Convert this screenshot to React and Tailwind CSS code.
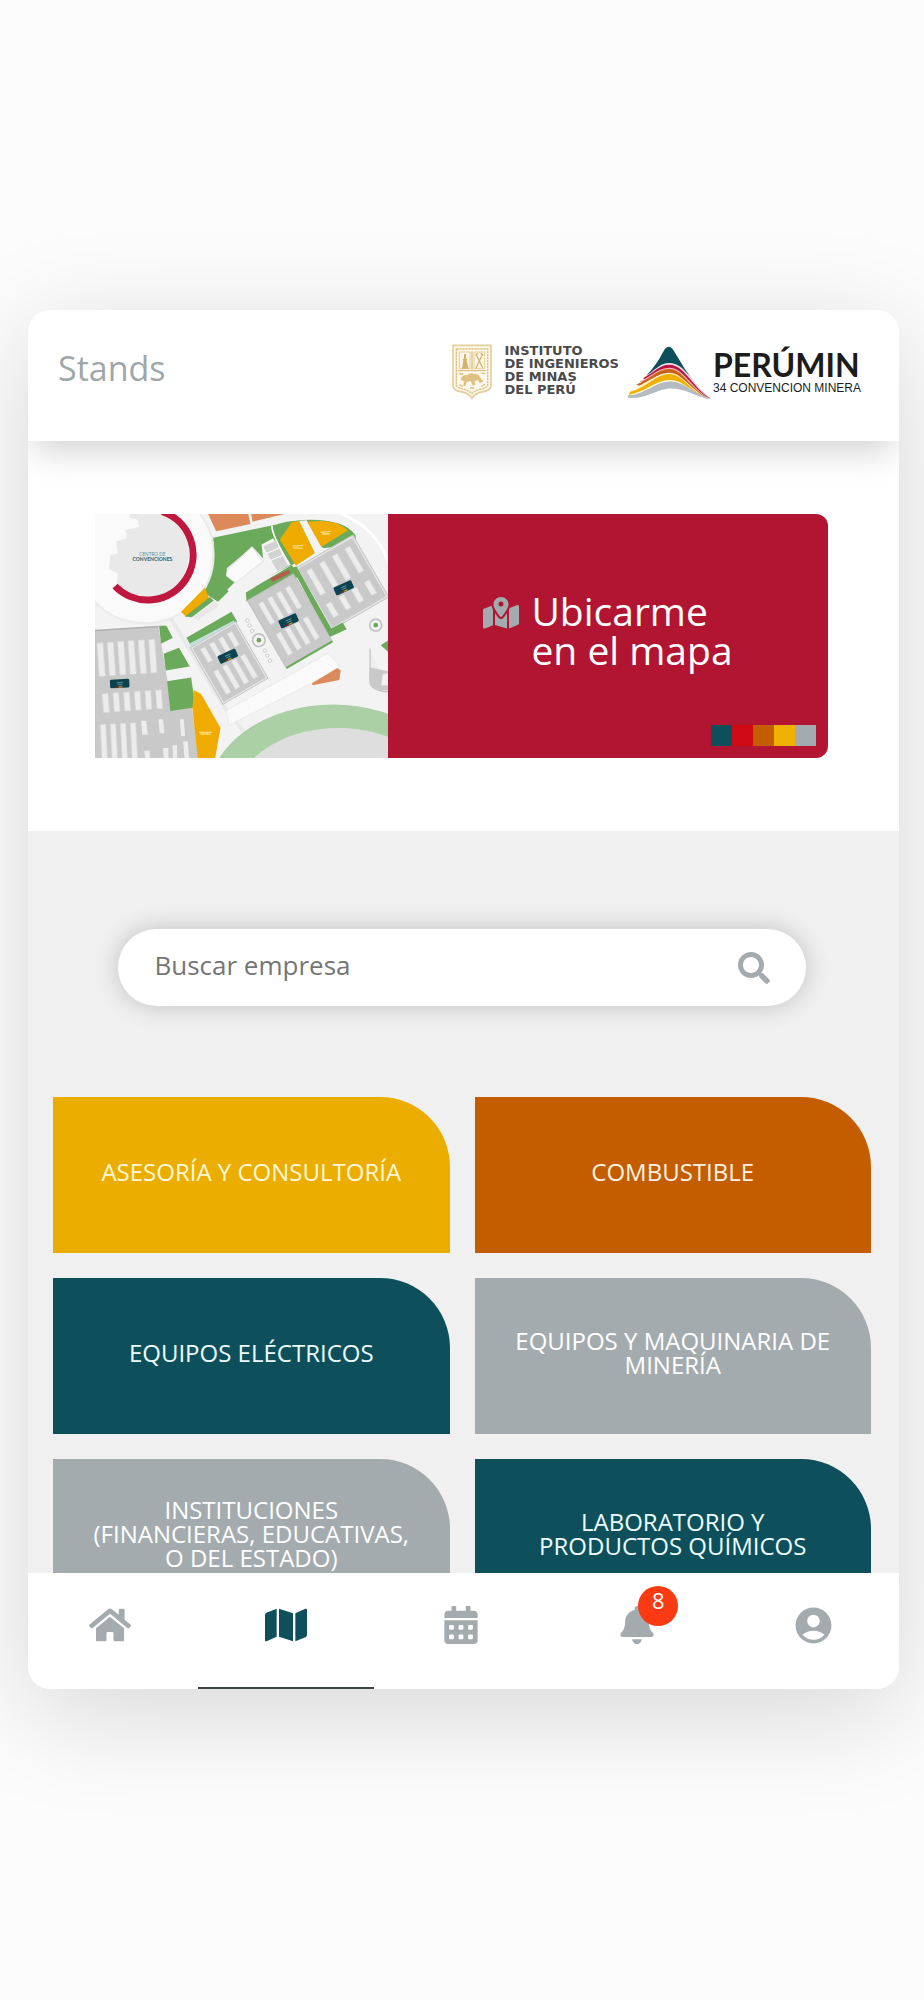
import React, { useState } from 'react';
import { FaBell, FaCalendarAlt, FaHome, FaMap, FaSearch } from 'react-icons/fa';
import { FaMapLocationDot } from 'react-icons/fa6';
import { MdAccountCircle } from 'react-icons/md';

const categories = [
    { name: 'ASESORÍA Y CONSULTORÍA', color: 'bg-[#ebad00] text-[#fff8d8]' },
    { name: 'COMBUSTIBLE', color: 'bg-[#c35d00] text-[#fff2e2]' },
    { name: 'EQUIPOS ELÉCTRICOS', color: 'bg-[#0d505b] text-[#eefcff]' },
    { name: 'EQUIPOS Y MAQUINARIA DE MINERÍA', color: 'bg-[#a4abae] text-white' },
    { name: 'INSTITUCIONES (FINANCIERAS, EDUCATIVAS, O DEL ESTADO)', color: 'bg-[#a4abae] text-white' },
    { name: 'LABORATORIO Y PRODUCTOS QUÍMICOS', color: 'bg-[#0d505b] text-[#eefcff]' },
];

const navItems = [
    { label: 'Inicio', icon: <FaHome size={42} /> },
    { label: 'Mapa', icon: <FaMap size={42} />, active: true },
    { label: 'Agenda', icon: <FaCalendarAlt size={38} /> },
    { label: 'Notificaciones', icon: <FaBell size={38} />, badge: 8 },
    { label: 'Perfil', icon: <MdAccountCircle size={43} /> },
];

const swatches = ['bg-[#0d505b]', 'bg-[#cf0a14]', 'bg-[#c35d00]', 'bg-[#f0b000]', 'bg-[#a4abae]'];

const ShieldLogo = () => (
    <svg viewBox="0 0 120 168" className="h-14 w-10" fill="none" aria-hidden="true">
        <path d="M3 4H117V128Q112 141 94 143Q72 146 60 163Q48 146 26 143Q8 141 3 128Z" fill="#fdf8ec" stroke="#e6cf9c" strokeWidth="5" />
        <path d="M13 15H107V124Q102 133 86 135Q69 139 60 149Q51 139 34 135Q18 133 13 124Z" stroke="#dfc182" strokeWidth="4" strokeDasharray="7 2" />
        <path d="M60 22V80M18 80H102" stroke="#dfc182" strokeWidth="4" />
        <path d="M22 24H54V74H22ZM66 24H98V74H66Z" stroke="#e6cd98" strokeWidth="3" />
        <path d="M30 74L34 50L32 44H36V30H42V44H46L44 50L50 74Z" fill="#d6b268" />
        <path d="M72 30L92 72M92 30L72 72M70 34L78 28M86 28L94 34" stroke="#d6b268" strokeWidth="4" />
        <path d="M26 108Q30 90 46 94Q54 84 66 90Q80 88 84 100L94 112L84 118L76 108L68 112L70 124H62L56 112L44 114L40 126H34L36 112Z" fill="#dfc182" />
        <path d="M20 90H34M88 88H100M22 122L32 128M98 120L88 128M54 132H66" stroke="#dfc182" strokeWidth="4" />
    </svg>
);

const PeakLogo = () => (
    <svg viewBox="10 10 248 170" className="h-14 w-[86px]" preserveAspectRatio="none" aria-hidden="true">
        <path d="M66 106Q96 72 112 38Q130 0 148 36Q176 88 206 130Q230 160 252 176L130 124Z" fill="#0d505b" />
        <path d="M60 110C90 92 104 68 132 68C178 68 198 132 250 175L130 150Z" fill="#f6dfe4" />
        <path d="M56 114C88 96 104 73 132 73C174 73 194 134 248 175L130 150Z" fill="#b51540" />
        <path d="M46 124C80 108 100 82 132 82C172 82 192 138 246 175L130 156Z" fill="#f2b3b0" />
        <path d="M36 134C74 118 98 86 132 86C170 86 190 142 244 175L130 160Z" fill="#c9621b" />
        <path d="M28 144C68 130 96 97 132 97C168 97 190 144 242 175L130 164Z" fill="#fff4cf" />
        <path d="M20 154C62 146 94 101 132 101C168 101 190 148 240 175L130 168L14 166Z" fill="#f0b000" />
        <path d="M14 163C60 158 92 119 134 119C172 119 196 156 246 175L130 172Z" fill="#fff8e6" />
        <path d="M12 167C60 164 92 124 136 124C176 124 200 160 252 177L14 174Z" fill="#b4bcc2" />
        <path d="M12 176C70 176 98 145 138 145C176 145 206 168 254 180V182H12Z" fill="#fff" />
    </svg>
);

// rows of stands inside a pavilion, drawn in the pavilion's own rotated frame
const Stands = ({ columns, rows, w, h, dx, dy }) => {
    const blocks = [];
    for (let r = 0; r < rows; r++) {
        for (let c = 0; c < columns; c++) {
            blocks.push(<rect key={`${r}-${c}`} x={c * dx} y={r * dy} width={w} height={h} />);
        }
    }
    return <g fill="#ececec" stroke="#dadada" strokeWidth="2">{blocks}</g>;
};

const PavilionTag = ({ x, y, angle }) => (
    <g transform={`translate(${x} ${y}) rotate(${angle})`}>
        <rect x="-29" y="-13" width="58" height="26" rx="4" fill="#0d4350" />
        <path d="M-8 -3H10M-6 3H8" stroke="#7fb5bb" strokeWidth="2" />
        <path d="M-14 10H-4" stroke="#cf0a14" strokeWidth="3" />
        <path d="M-4 10H8" stroke="#f0b000" strokeWidth="3" />
    </g>
);

const VenueMap = () => (
    <svg viewBox="16 27 878 731" preserveAspectRatio="xMidYMid slice" className="block aspect-[293/244] w-2/5" aria-label="Mapa del recinto">
        <rect x="16" y="27" width="878" height="731" fill="#f3f3f3" />
        <path d="M740 20Q870 70 900 190" stroke="#fff" strokeWidth="8" fill="none" />
        <path d="M16 290Q110 360 240 335L400 600L470 690" stroke="#e9e9e9" strokeWidth="12" fill="none" />

        <path d="M370 98L552 60L590 50L640 45Q760 40 796 90L800 118L690 130L606 180L480 240L430 245L385 290L340 262Q378 190 370 98Z" fill="#6aaa5a" />
        <path d="M546 62Q546 92 600 180" stroke="#fff" strokeWidth="5" fill="none" />
        <path d="M410 190L488 125L520 160L515 118L550 100L600 180L470 250L470 288L428 268L412 254L436 230Z" fill="#f3f3f3" />
        <path d="M412 195L486 126L520 168L438 234L410 212Z" fill="#fafafa" stroke="#e5e5e5" strokeWidth="3" />
        <path d="M520 124L556 108L594 182L562 198Z" fill="#d3d3d3" />
        <path d="M528 146L570 128M538 168L580 150" stroke="#fff" strokeWidth="3" />
        <path d="M355 27H475L482 57L379 79Z" fill="#dc8a5b" />
        <path d="M484 27H584L488 50Z" fill="#dc8a5b" />
        <path d="M570 104L605 52L628 48L675 144L618 182Z" fill="#f0ab00" />
        <path d="M628 48L650 46L700 132L676 146Z" fill="#f3f3f3" />
        <path d="M652 50Q738 40 774 76L694 126Z" fill="#f0ab00" />
        <path d="M608 123L640 121M610 129H638M692 82L722 79M696 87H720" stroke="#ffdc80" strokeWidth="4" />

        <circle cx="165" cy="148" r="206" fill="#fafafa" stroke="#ececec" strokeWidth="7" />
        <path d="M120 27H230Q300 80 298 155Q280 270 175 280Q120 284 82 238L84 205L58 192L62 150L84 145L80 110L112 98L106 76L148 66L144 44L120 38Z" fill="#e9e9e9" />
        <path d="M218 20A136 136 0 1 1 76 243" stroke="#c0173f" strokeWidth="21" fill="none" />
        <text x="188" y="153" textAnchor="middle" fontSize="14" fill="#668e96" fontFamily="Lato, sans-serif">CENTRO DE</text>
        <text x="188" y="169" textAnchor="middle" fontSize="15" fontWeight="900" fill="#386b76" fontFamily="Lato, sans-serif">CONVENCIONES</text>
        <path d="M274 320L345 248L358 280L290 336Z" fill="#f0ab00" />
        <path d="M286 334L360 276L372 286L306 336Z" fill="#6aaa5a" />
        <path d="M310 336L376 288L388 302L322 346Z" fill="#e8e8e8" />

        <g transform="translate(620 190) rotate(-30)">
            <rect x="0" y="0" width="194" height="210" fill="#c9c9c9" stroke="#e6e6e6" strokeWidth="7" />
            <rect x="-2" y="-2" width="198" height="214" fill="none" stroke="#b6b6b6" strokeWidth="2" />
            <g transform="translate(22 22)"><Stands columns={4} rows={1} w={17} h={84} dx={44} dy={0} /></g>
            <g transform="translate(22 138)"><Stands columns={4} rows={1} w={17} h={45} dx={44} dy={0} /></g>
        </g>
        <path d="M606 188L718 396L770 372L758 352L724 370L620 184Z" fill="#6aaa5a" />
        <path d="M606 180L625 215L470 290L468 262Z" fill="#6aaa5a" />
        <path d="M540 220L596 194L602 204L548 230Z" fill="#b75b50" />

        <g transform="translate(472 286) rotate(-30)">
            <rect x="0" y="0" width="160" height="232" fill="#c9c9c9" stroke="#b6b6b6" strokeWidth="2" />
            <path d="M0 234H160" stroke="#6aaa5a" strokeWidth="6" />
            <g transform="translate(24 26)"><Stands columns={4} rows={2} w={15} h={72} dx={31} dy={106} /></g>
        </g>
        <path d="M290 398L425 320L442 350L306 426Z" fill="#6aaa5a" />
        <path d="M298 416L432 346L438 358L306 424Z" fill="#bfe0dc" />
        <g transform="translate(304 428) rotate(-30)">
            <rect x="0" y="0" width="152" height="192" fill="#c9c9c9" stroke="#e6e6e6" strokeWidth="6" />
            <rect x="-2" y="-2" width="156" height="196" fill="none" stroke="#b6b6b6" strokeWidth="2" />
            <g transform="translate(22 18)"><Stands columns={4} rows={1} w={15} h={46} dx={31} dy={0} /></g>
            <g transform="translate(22 96)"><Stands columns={4} rows={1} w={15} h={78} dx={31} dy={0} /></g>
        </g>
        <path d="M410 616L714 444L742 472L748 492L418 660Z" fill="#fafafa" stroke="#ececec" strokeWidth="3" />
        <path d="M666 534L742 488L752 496L748 524L668 540Z" fill="#dc8a5b" />

        <path d="M16 376L206 364L232 520L250 610L306 604L326 758H16Z" fill="#c9c9c9" />
        <path d="M16 376L206 364" stroke="#b0b0b0" strokeWidth="4" />
        <g transform="translate(22 414) rotate(-4)"><Stands columns={6} rows={1} w={18} h={100} dx={31} dy={0} /></g>
        <g transform="translate(38 566) rotate(-4)"><Stands columns={6} rows={1} w={17} h={56} dx={32} dy={0} /></g>
        <g transform="translate(32 658) rotate(-3)"><Stands columns={4} rows={1} w={16} h={110} dx={30} dy={0} /></g>
        <path d="M154 646H170L174 688H158ZM206 642H220L224 684H210ZM270 642H282L286 692H274ZM164 736H180V758H166ZM220 728H236V758H222ZM248 720H262V758H250ZM280 708H294L298 758H284Z" fill="#ececec" />
        <g fill="#6aaa5a">
            <path d="M208 362L230 362L249 398L214 416Z" />
            <path d="M222 446L268 428L300 484L228 496Z" />
            <path d="M232 528L304 517L317 606L242 617Z" />
            <path d="M872 420L894 406V440Z" />
        </g>
        <path d="M312 554L334 566L392 668L376 758H324L308 610Z" fill="#f0ab00" />
        <path d="M328 681H366M332 686H362" stroke="#ffdc80" strokeWidth="4" />

        <ellipse cx="730" cy="870" rx="375" ry="272" fill="#abd0a6" />
        <ellipse cx="745" cy="900" rx="320" ry="232" fill="#dedede" />
        <path d="M840 430V530Q842 556 894 560" stroke="#c5c5c5" strokeWidth="4" fill="#eee" />
        <path d="M838 486L894 498V556Q842 556 838 526Z" fill="#c9c9c9" />
        <path d="M878 508L894 504V540H874Z" fill="#f3f3f3" />

        <g fill="#f3f3f3" stroke="#c2c2c2" strokeWidth="5">
            <circle cx="507" cy="405" r="19" />
            <circle cx="857" cy="360" r="18" />
        </g>
        <circle cx="507" cy="405" r="7" fill="#6aaa5a" />
        <circle cx="857" cy="360" r="7" fill="#6aaa5a" />
        <g fill="#fff" stroke="#b5b5b5" strokeWidth="2">
            <circle cx="473" cy="346" r="5" />
            <circle cx="479" cy="361" r="5" />
            <circle cx="487" cy="377" r="5" />
            <circle cx="525" cy="436" r="5" />
            <circle cx="532" cy="451" r="5" />
            <circle cx="540" cy="466" r="5" />
        </g>

        <PavilionTag x={761} y={248} angle={-24} />
        <PavilionTag x={596} y={347} angle={-24} />
        <PavilionTag x={414} y={453} angle={-24} />
        <PavilionTag x={90} y={535} angle={-3} />
    </svg>
);

const Header = () => (
    <header className="relative z-10 flex items-start justify-between bg-white pt-[30px] pr-[38px] pb-[41px] pl-[30px] shadow-[0_16px_32px_-6px_rgba(0,0,0,0.18)]">
        <h1 className="text-[34px] leading-[56px] text-[#a0a7aa]">Stands</h1>
        <div className="flex items-center pt-1">
            <ShieldLogo />
            <p className="mb-1 ml-3 font-['DejaVu_Sans'] text-[13px] leading-[13px] font-bold text-[#4a4a4a]">
                INSTITUTO
                <br />
                DE INGENIEROS
                <br />
                DE MINAS
                <br />
                DEL PERÚ
            </p>
            <div className="ml-2 flex items-center">
                <PeakLogo />
                <div className="text-[#1c1c1c]">
                    <p className="font-[Lato] text-[32px] leading-[32px] font-bold">PERÚMIN</p>
                    <p className="font-['Liberation_Sans',sans-serif] text-[12px] leading-[14px]">34 CONVENCION MINERA</p>
                </div>
            </div>
        </div>
    </header>
);

const MapBanner = () => (
    <section className="bg-white py-[73px] pr-1">
        <a href="#mapa" className="mx-auto flex w-[84.5%] overflow-hidden rounded-r-xl bg-[#b21531] text-white">
            <VenueMap />
            <div className="relative flex flex-1 items-center justify-center pb-3">
                <div className="flex items-start gap-3">
                    <FaMapLocationDot size={36} className="mt-1 text-[#a4abae]" />
                    <span className="text-[39px] leading-[39px] font-medium">
                        Ubicarme
                        <br />
                        en el mapa
                    </span>
                </div>
                <div className="absolute right-3 bottom-3 flex">
                    {swatches.map((swatch) => (
                        <span key={swatch} className={`size-[21px] ${swatch}`} />
                    ))}
                </div>
            </div>
        </a>
    </section>
);

const BottomNav = () => (
    <nav className="relative z-10 -mr-0.5 -ml-1.5 grid h-[116px] grid-cols-5 bg-white">
        {navItems.map(({ label, icon, active, badge }) => (
            <a
                key={label}
                href={`#${label.toLowerCase()}`}
                aria-label={label}
                className={`flex items-center justify-center border-b-2 pb-2.5 ${active ? 'border-[#3f4647] text-[#0d505b]' : 'border-transparent text-[#a4abae]'}`}
            >
                <span className="relative">
                    {icon}
                    {badge && (
                        <span className="absolute -top-5 left-5 flex size-10 justify-center rounded-full bg-[#f93a12] text-[22px] leading-7 font-medium text-white">
                            {badge}
                        </span>
                    )}
                </span>
            </a>
        ))}
    </nav>
);

export default function App() {
    const [query, setQuery] = useState('');

    return (
        <div className="min-h-screen bg-[#fcfcfc] py-[310px] pr-[25px] pl-7 font-['Open_Sans','Noto_Sans',sans-serif]">
            <div className="overflow-hidden rounded-[22px] bg-[#f0f0f0] shadow-[0_24px_110px_rgba(0,0,0,0.15)]">
                <Header />
                <main>
                    <MapBanner />
                    <section className="h-[742px] overflow-hidden pt-[98px] pr-7 pl-[25px]">
                        <label className="mx-auto flex h-[77px] w-[84%] items-center rounded-full bg-white px-9 shadow-[0_0_24px_rgba(0,0,0,0.2)]">
                            <input
                                type="text"
                                value={query}
                                onChange={(e) => setQuery(e.target.value)}
                                placeholder="Buscar empresa"
                                aria-label="Buscar empresa"
                                className="min-w-0 flex-1 bg-transparent pb-1 text-[26px] text-[#757575] outline-none placeholder:text-[#757575]"
                            />
                            <FaSearch size={32} className="text-[#a4abae]" />
                        </label>
                        <div className="mt-[91px] grid grid-cols-2 gap-[25px]">
                            {categories.map(({ name, color }) => (
                                <button
                                    key={name}
                                    type="button"
                                    className={`flex h-[156px] items-center justify-center rounded-tr-[70px] px-9 pb-1.5 text-center text-[24px] leading-[24px] ${color}`}
                                >
                                    {name}
                                </button>
                            ))}
                        </div>
                    </section>
                </main>
                <BottomNav />
            </div>
        </div>
    );
}
